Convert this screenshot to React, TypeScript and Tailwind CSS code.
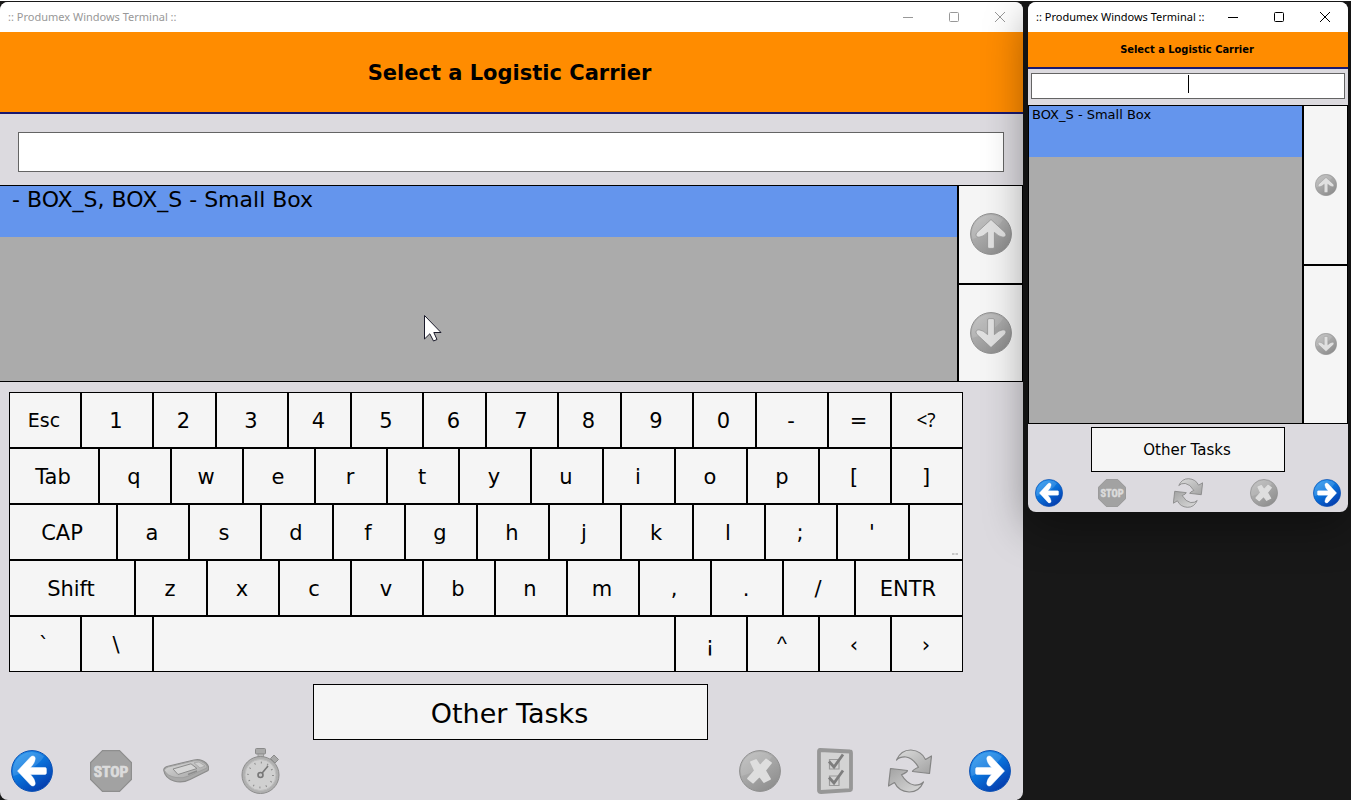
import clsx from 'clsx'

const FACE = 'font-["DejaVu_Sans",Verdana,sans-serif]'

type KeyDef = { label: string; span: string; name?: string; text?: string }

const W6 = 'col-span-6'
const W7 = 'col-span-7'
const W8 = 'col-span-8'

const keys = (chars: string, span = W8): KeyDef[] => chars.split('').map(label => ({ label, span }))

const KEY_ROWS: KeyDef[][] = [
  [
    { label: 'Esc', span: W8, text: 'text-[19px]' },
    // digits alternate between wide and narrow keys
    ...'1234567890-='.split('').map((label, i) => ({ label, span: i % 2 === 0 ? W8 : W7 })),
    { label: '<?', span: W8, name: 'Backspace', text: 'text-[19px] font-["Noto_Sans",sans-serif]' },
  ],
  [{ label: 'Tab', span: 'col-span-10' }, ...keys('qwertyuiop[]')],
  [{ label: 'CAP', span: 'col-span-12' }, ...keys("asdfghjkl;'"), { label: '', span: W6, name: 'Options' }],
  [{ label: 'Shift', span: 'col-span-14' }, ...keys('zxcvbnm,./'), { label: 'ENTR', span: 'col-span-12' }],
  [
    ...keys('`\\'),
    { label: '', span: 'col-span-58', name: 'Space' },
    { label: '¡', span: W8 },
    { label: '^', span: W8, text: 'text-[21px] font-["Liberation_Sans",sans-serif]' },
    ...keys('‹›'),
  ],
]

/* ---------- icons ---------- */

function IconDefs() {
  return (
    <svg className="absolute size-0" aria-hidden="true">
      <defs>
        <linearGradient id="blue" x1="0.1" y1="0" x2="0.8" y2="1">
          <stop offset="0%" stopColor="#2f9bf0" />
          <stop offset="45%" stopColor="#0a74dc" />
          <stop offset="100%" stopColor="#0436a8" />
        </linearGradient>
        <linearGradient id="gray" x1="0.1" y1="0" x2="0.8" y2="1">
          <stop offset="0%" stopColor="#bcbcbc" />
          <stop offset="50%" stopColor="#a6a6a6" />
          <stop offset="100%" stopColor="#8c8c8c" />
        </linearGradient>
        <linearGradient id="silver" x1="0" y1="0" x2="1" y2="1">
          <stop offset="0%" stopColor="#dcdcdc" />
          <stop offset="100%" stopColor="#a2a2a2" />
        </linearGradient>
      </defs>
    </svg>
  )
}

const ROTATION = { left: 0, up: 90, right: 180, down: 270 }

function ArrowIcon({ dir, muted, className }: { dir: keyof typeof ROTATION; muted?: boolean; className: string }) {
  return (
    <svg viewBox="0 0 42 42" className={className} aria-hidden="true">
      <circle cx="21" cy="21" r="20.4" fill={muted ? 'url(#gray)' : 'url(#blue)'} stroke={muted ? '#8f8f8f' : '#0a50b4'} strokeWidth="1" />
      <path d="M2.5 26 A19 19 0 0 1 33 6.5 Q26 19 2.5 26Z" fill="#fff" opacity={muted ? 0.12 : 0.14} />
      <g transform={`rotate(${ROTATION[dir]} 21 21)`} strokeLinejoin="round">
        <path
          d="M6.5 21 L19.6 6.9 Q21 5.6 22.8 6.2 Q24.4 6.8 24.2 9 Q24 13 19.4 17.6 H34 Q35.4 17.6 35.4 19 V23 Q35.4 24.4 34 24.4 H19.4 Q24 29 24.2 33 Q24.4 35.2 22.8 35.8 Q21 36.4 19.6 35.1Z"
          fill={muted ? '#e0e0e0' : '#fff'}
          stroke={muted ? '#8c8c8c' : '#fff'}
          strokeWidth={muted ? 0.7 : 0.5}
        />
      </g>
    </svg>
  )
}

function StopIcon({ className }: { className: string }) {
  return (
    <svg viewBox="0 0 42 42" className={className} aria-hidden="true">
      <path d="M12.5 0.6 H29.5 L41.4 12.5 V29.5 L29.5 41.4 H12.5 L0.6 29.5 V12.5Z" fill="#a2a2a2" stroke="#8e8e8e" strokeWidth="1.2" />
      <text x="21" y="26.600" textAnchor="middle" fontSize="15.500" fontWeight="700" fill="#dcdcdc" stroke="#dcdcdc" strokeWidth="0.7" fontFamily="'Liberation Sans Narrow','Roboto Condensed',sans-serif">STOP</text>
    </svg>
  )
}

function ScannerIcon({ className }: { className: string }) {
  return (
    <svg viewBox="0 0 46 24" className={className} aria-hidden="true">
      <path d="M1 12 Q0 9 4 7.500 L31 1 Q38 -0.5 43 4 Q47 8 45 11.500 L27 20.500 Q19 24.500 11 22 Q2 19 1 12Z" fill="#a9a9a9" stroke="#8c8c8c" strokeWidth="1.200" />
      <path d="M1.500 11.500 Q1 9.500 5 8 L31 1.800 Q37 0.5 42 4.500 Q45 7.500 44 9 L27 16.500 Q20 20 13 18.500 Q4 17 1.500 11.500Z" fill="url(#silver)" stroke="#9a9a9a" strokeWidth="0.8" />
      <path d="M10 10 L28 4.800 L34 9.500 L15 15.500Z" fill="#d6d6d6" stroke="#8c8c8c" />
      <path d="M31 3.800 L36 3 L42 7 L37 9Z" fill="#cfcfcf" stroke="#a4a4a4" strokeWidth="0.8" />
      <path d="M25 15.500 L34 12" stroke="#8c8c8c" strokeWidth="1.500" />
    </svg>
  )
}

function StopwatchIcon({ className }: { className: string }) {
  return (
    <svg viewBox="0 0 40 46" className={className} aria-hidden="true">
      <rect x="14.500" y="0.5" width="10" height="5.500" rx="1" fill="#a9a9a9" stroke="#8a8a8a" />
      <rect x="17" y="6" width="5.500" height="4" fill="#b8b8b8" stroke="#929292" strokeWidth="0.8" />
      <path d="M28 13.500 L31 10.500 L34 13.500 L31 16.500Z" fill="#b8b8b8" stroke="#929292" strokeWidth="0.8" />
      <path d="M29.500 10.500 L33 7 L37.500 11.500 L34 15Z" fill="#a9a9a9" stroke="#8a8a8a" />
      <circle cx="19.500" cy="27" r="18.500" fill="#b0b0b0" stroke="#8c8c8c" />
      <circle cx="19.500" cy="27" r="15.500" fill="#d0d0d0" stroke="#bebebe" />
      <circle cx="19.500" cy="27" r="12.500" fill="none" stroke="#8a8a8a" strokeWidth="1.800" strokeDasharray="1 5.545" />
      <path d="M19.500 27 L27 18" stroke="#777" strokeWidth="1.600" />
      <circle cx="19.500" cy="27" r="2.500" fill="#c8c8c8" stroke="#777" strokeWidth="1.600" />
    </svg>
  )
}

function CrossIcon({ className }: { className: string }) {
  return (
    <svg viewBox="0 0 42 42" className={className} aria-hidden="true">
      <circle cx="21" cy="21" r="20.400" fill="url(#gray)" stroke="#8f8f8f" />
      <path d="M2.500 26 A19 19 0 0 1 33 6.500 Q26 19 2.500 26Z" fill="#fff" opacity="0.12" />
      <path
        d="M12 12 L17 10 L21 16 L27 9.500 L32 13 L26 20.500 L31 29 L25 32 L20.500 26 L14 32.500 L9 28.500 L16 20.500Z"
        fill="#dedede" stroke="#dedede" strokeWidth="1.800" strokeLinejoin="round"
      />
    </svg>
  )
}

function ChecklistIcon({ className }: { className: string }) {
  return (
    <svg viewBox="0 0 36 46" className={className} aria-hidden="true">
      <path d="M3 2 L33 3.500 Q34 3.500 34 5 V41 Q34 42 33 42.200 L4 44 Q2 44 2 42.500 V3.500 Q2 2 3 2Z" fill="#d3d3d3" stroke="#979797" strokeWidth="3.800" strokeLinejoin="round" />
      <path d="M12.500 11.500 H22 V21 H12.500Z M12.500 28 H22 V37.500 H12.500Z" fill="none" stroke="#9a9a9a" strokeWidth="1.200" />
      <path d="M12 13.500 L17 19 L26 6.500 M12 29.500 L17 35 L26 22.500" fill="none" stroke="#7e7e7e" strokeWidth="2.800" />
    </svg>
  )
}

function RefreshIcon({ className }: { className: string }) {
  const arrow = 'M8.500 11 Q13 0.800 23 1 Q33.500 1.800 37.500 10.500 L43.500 7 L41.500 24.500 L24.500 22.500 Q25 20.500 30.500 18.200 Q25 9 18 8 Q12 7.500 8.500 11Z'
  return (
    <svg viewBox="0 0 44 44" className={className} aria-hidden="true">
      <g fill="url(#silver)" stroke="#858585" strokeWidth="1.200" strokeLinejoin="round">
        <path d={arrow} />
        <path d={arrow} transform="rotate(180 22 22)" />
      </g>
    </svg>
  )
}

/* ---------- window parts ---------- */

function TitleBar({ active }: { active?: boolean }) {
  return (
    <div className={clsx('flex h-[30px] items-center bg-white pr-[17px] pl-2', active ? 'text-black' : 'text-[#989898]')}>
      <span className='font-["Noto_Sans",sans-serif] text-[11px] whitespace-nowrap'>:: Produmex Windows Terminal ::</span>
      <div className="ml-auto flex gap-[34px]">
        <button aria-label="Minimize">
          <svg viewBox="0 0 12 12" className="size-3"><path d="M1 6.500 H11" stroke="currentColor" /></svg>
        </button>
        <button aria-label="Maximize">
          <svg viewBox="0 0 12 12" className="size-3"><rect x="1.500" y="1.500" width="9" height="9" rx="1" fill="none" stroke="currentColor" /></svg>
        </button>
        <button aria-label="Close">
          <svg viewBox="0 0 12 12" className="size-3"><path d="M1 1 L11 11 M11 1 L1 11" stroke="currentColor" /></svg>
        </button>
      </div>
    </div>
  )
}

function Pager({ side, icon }: { side: string; icon: string }) {
  return (
    <div className={clsx('flex shrink-0 flex-col gap-0.5', side)}>
      <button aria-label="Scroll up" className="flex flex-1 items-center justify-center bg-[#f5f5f5]">
        <ArrowIcon dir="up" muted className={icon} />
      </button>
      <button aria-label="Scroll down" className="flex flex-1 items-center justify-center bg-[#f5f5f5]">
        <ArrowIcon dir="down" muted className={icon} />
      </button>
    </div>
  )
}

function Keyboard() {
  return (
    <div className="mt-2.5 mr-[60px] ml-[9px] grid grid-cols-[repeat(106,minmax(0,1fr))]">
      {KEY_ROWS.flat().map((k, i) => (
        <button
          key={i}
          aria-label={k.name}
          className={clsx('relative h-14 border border-black bg-[#f5f5f5] pr-0.5', k.span, k.text ?? 'pt-[3px] text-[21px]')}
        >
          {k.label}
          {k.name === 'Options' && (
            <svg viewBox="0 0 6 2" className="absolute right-1 bottom-1 h-0.5 w-1.5">
              <path d="M0 1 H2.500 M3.500 1 H6" stroke="#999" />
            </svg>
          )}
        </button>
      ))}
    </div>
  )
}

function TerminalLarge() {
  return (
    <main className="flex min-w-0 flex-col overflow-hidden rounded-lg bg-[#dcdadf]">
      <TitleBar />
      <h1 className="flex h-[82px] items-center justify-center border-b-2 border-[#191970] bg-[#ff8c00] pt-1 pr-1 text-[21px] font-bold">
        Select a Logistic Carrier
      </h1>
      <input aria-label="Carrier" className="mt-[18px] mr-[19px] mb-[13px] ml-[18px] h-10 border border-[#646464] bg-white px-2 text-xl outline-none" />
      <div className="flex min-h-[197px] flex-1 gap-0.5 border-y border-r border-black bg-black">
        <ul className="flex-1 bg-[#ababab]">
          <li className="h-[51px] bg-[#6495ed] pl-3 text-[22px] leading-7">- BOX_S, BOX_S - Small Box</li>
        </ul>
        <Pager side="w-[63px]" icon="size-[42px]" />
      </div>
      <Keyboard />
      <button className="mt-3 mr-0.5 h-14 w-[395px] self-center border border-black bg-[#f5f5f5] pt-1 pr-0.5 text-[27px]">Other Tasks</button>
      <div className="mt-2.5 mb-2 flex h-[42px] items-center justify-between pr-3 pl-[11px]">
        <div className="flex items-center gap-[33px]">
          <button aria-label="Back" className="mr-1"><ArrowIcon dir="left" className="size-[42px]" /></button>
          <button aria-label="Stop"><StopIcon className="size-[42px]" /></button>
          <button aria-label="Scanner" className="-mx-0.5"><ScannerIcon className="h-6 w-[46px]" /></button>
          <button aria-label="Timer"><StopwatchIcon className="h-[46px] w-[42px]" /></button>
        </div>
        <div className="flex items-center gap-[33px]">
          <button aria-label="Cancel"><CrossIcon className="size-[42px]" /></button>
          <button aria-label="Checklist"><ChecklistIcon className="h-[46px] w-[42px]" /></button>
          <button aria-label="Refresh" className="-ml-px mr-1"><RefreshIcon className="size-[44px]" /></button>
          <button aria-label="Next"><ArrowIcon dir="right" className="size-[42px]" /></button>
        </div>
      </div>
    </main>
  )
}

function TerminalSmall() {
  return (
    <aside className="relative flex flex-col self-start rounded-lg shadow-[0_14px_44px_rgba(0,0,0,0.4)]">
      <div className="flex flex-col overflow-hidden rounded-lg bg-[#dcdadf]">
        <TitleBar active />
        <h2 className='flex h-[37px] items-center justify-center border-b-2 border-[#191970] bg-[#ff8c00] pt-0.5 pr-0.5 font-["DejaVu_Sans_Condensed","DejaVu_Sans",sans-serif] text-[11px] font-bold'>
          Select a Logistic Carrier
        </h2>
        <div className="relative mx-[3px] mt-1 mb-1.5">
          <input aria-label="Carrier" className="block h-[26px] w-full border border-[#646464] bg-white text-center text-sm caret-transparent outline-none" />
          <span className="absolute top-0.5 left-1/2 h-[18px] w-px bg-black" />
        </div>
        <div className="flex h-[319px] gap-0.5 border border-black bg-black">
          <ul className="flex-1 bg-[#ababab]">
            <li className="h-[51px] bg-[#6495ed] pl-[3px] text-[13px] leading-[18px]">BOX_S - Small Box</li>
          </ul>
          <Pager side="w-[43px]" icon="size-[22px]" />
        </div>
        <button className="mt-[3px] h-[45px] w-[194px] self-center border border-black bg-[#f5f5f5] pt-0.5 pr-0.5 text-[15px]">Other Tasks</button>
        <div className="mt-[7px] mb-[5px] flex h-7 items-center justify-between px-[7px]">
          <button aria-label="Back"><ArrowIcon dir="left" className="size-7" /></button>
          <button aria-label="Stop"><StopIcon className="size-7" /></button>
          <button aria-label="Refresh" className="mx-3"><RefreshIcon className="size-[30px]" /></button>
          <button aria-label="Cancel"><CrossIcon className="size-7" /></button>
          <button aria-label="Next"><ArrowIcon dir="right" className="size-7" /></button>
        </div>
      </div>
    </aside>
  )
}

export default function App() {
  return (
    <div className={clsx('relative grid min-h-screen grid-cols-[minmax(0,1fr)_320px] gap-[5px] overflow-hidden border-t border-white bg-[#181818] pt-px pr-[3px] text-black', FACE)}>
      <IconDefs />
      <TerminalLarge />
      <TerminalSmall />
      <svg viewBox="0 0 19 28" className="pointer-events-none absolute top-[313px] left-[423px] h-7 w-[19px]" aria-hidden="true">
        <path d="M1.500 1.500 V25 L6.800 19.800 L10.500 27 L14 25.500 L10.800 18.500 H18Z" fill="#fff" stroke="#1a1a2a" strokeLinejoin="round" />
      </svg>
    </div>
  )
}
